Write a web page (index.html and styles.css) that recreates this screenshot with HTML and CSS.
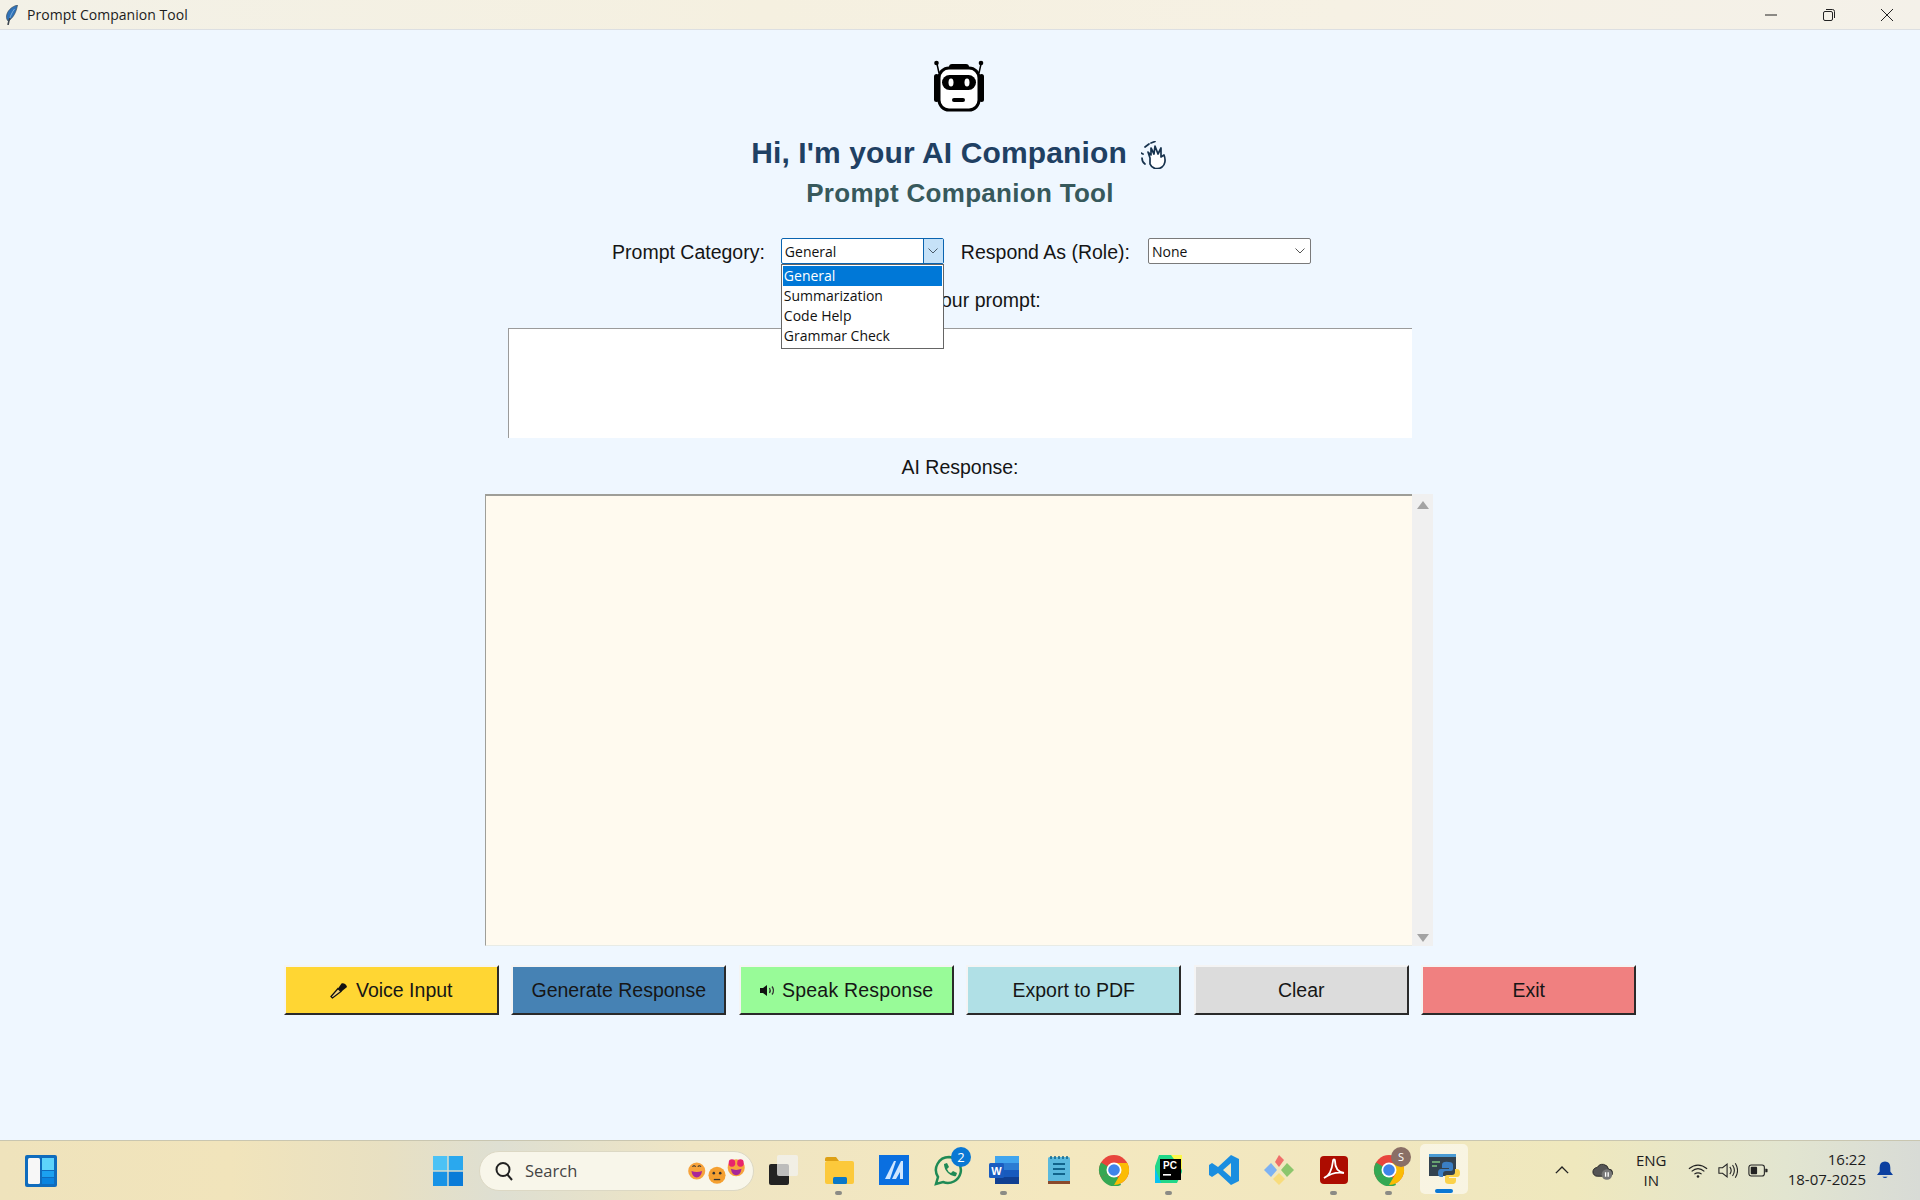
FILE: index.html
```html
<!DOCTYPE html>
<html lang="en">
<head>
    <meta charset="UTF-8">
    <meta name="viewport" content="width=device-width, initial-scale=1.0">
    <title>Prompt Companion Tool</title>
    <link rel="stylesheet" href="styles.css">
</head>
<body>
    <div class="titlebar">
        <svg class="feather" viewBox="0 0 14 20"><path d="M12.500 0C6.500 1.500 2 6 1.500 11c-.2 2 .2 3.500 1.500 5C8 13.500 11.500 7 12.500 0z" fill="#2f72b8" stroke="#33414d" stroke-width=".6"/><path d="M9.500 4C7 7 5.500 11 4.500 14" stroke="#9cc4e8" stroke-width=".7" fill="none"/><path d="M5 13C4 15 3.500 17 3 20" stroke="#3c4650" stroke-width="1.600" fill="none"/></svg>
        <span class="titlebar-text">Prompt Companion Tool</span>
        <div class="window-controls">
            <svg viewBox="0 0 14 14"><path d="M1 7h12" stroke="#222" fill="none"/></svg>
            <svg viewBox="0 0 14 14"><rect x="1.500" y="3.500" width="9" height="9" rx="1.500" stroke="#222" fill="none"/><path d="M4 1.500h6.500a2 2 0 0 1 2 2V10" stroke="#222" fill="none"/></svg>
            <svg viewBox="0 0 14 14"><path d="M1 1l12 12M13 1L1 13" stroke="#222" fill="none"/></svg>
        </div>
    </div>

    <main class="app">
        <svg class="robot" viewBox="0 0 50 52">
            <circle cx="2.500" cy="3" r="2.300" fill="#000"/>
            <circle cx="47" cy="3" r="2.300" fill="#000"/>
            <path d="M3 4l2 9M47 4l-2 9" stroke="#000" stroke-width="1.500"/>
            <path d="M15 9V7q0-3 3-3h14q3 0 3 3v2z" fill="#000"/>
            <rect x="0" y="14" width="5" height="28" rx="2.500" fill="#000"/>
            <rect x="45" y="14" width="5" height="28" rx="2.500" fill="#000"/>
            <rect x="5" y="8" width="40" height="42" rx="10" fill="#fff" stroke="#000" stroke-width="3"/>
            <rect x="8" y="15" width="34" height="15" rx="7.500" fill="#000"/>
            <ellipse cx="17" cy="22.500" rx="2.500" ry="4" fill="#fff"/>
            <ellipse cx="33" cy="22.500" rx="2.500" ry="4" fill="#fff"/>
            <rect x="18" y="38" width="13" height="4" rx="2" fill="#000"/>
        </svg>
        <h1 class="greeting">Hi, I'm your AI Companion
            <svg class="wave" viewBox="0 0 28 28"><g fill="none" stroke="#17324d" stroke-width="1.700" stroke-linecap="round" stroke-linejoin="round"><path d="M9 17l-2-6 3 3 0-7 3 6 1-8 3 8 3-6 0 9 3-2c2 5 1 10-2 12-4 3-10 2-12-3z" fill="#fff"/><path d="M1 17q0 4 3 6M0 12l2 1"/><path d="M4 6l4-3M10 2l4-1.500"/></g></svg>
        </h1>
        <h2 class="subtitle">Prompt Companion Tool</h2>

        <div class="options-row">
            <label class="field-label">Prompt Category:</label>
            <div class="combo combo-open">
                <span class="combo-value">General</span>
                <span class="combo-arrow"><svg viewBox="0 0 10 6"><path d="M.5.5L5 5 9.500.5" stroke="#4a5a68" fill="none"/></svg></span>
                <ul class="combo-list">
                    <li class="selected">General</li>
                    <li>Summarization</li>
                    <li>Code Help</li>
                    <li>Grammar Check</li>
                </ul>
            </div>
            <label class="field-label">Respond As (Role):</label>
            <div class="combo combo-role">
                <span class="combo-value">None</span>
                <span class="combo-arrow"><svg viewBox="0 0 10 6"><path d="M.5.5L5 5 9.500.5" stroke="#555" fill="none"/></svg></span>
            </div>
        </div>

        <label class="field-label prompt-label">Enter your prompt:</label>
        <textarea class="prompt-box"></textarea>

        <label class="field-label response-label">AI Response:</label>
        <div class="response-wrap">
            <textarea class="response-box"></textarea>
            <div class="scrollbar">
                <span class="arrow-up"></span>
                <span class="arrow-down"></span>
            </div>
        </div>

        <div class="button-row">
            <button class="btn btn-voice">
                <svg class="btn-icon" viewBox="0 0 18 17"><path d="M2.500 16L1 14.500l7-8 3 3z" fill="#f3d27a" stroke="#111" stroke-width="1.300"/><path d="M8 6.500l3.500-5c2-1 5 1 5.500 3.500l-5.500 4.500z" fill="#111"/></svg>
                Voice Input
            </button>
            <button class="btn btn-generate">Generate Response</button>
            <button class="btn btn-speak">
                <svg class="btn-icon icon-speaker" viewBox="0 0 17 11"><path d="M1 3h3l4-3v11L4 8H1z" fill="#111"/><path d="M10.500 3q1.500 2.500 0 5M13 1.500q3 4 0 8" stroke="#333" stroke-width="1.300" fill="none"/></svg>
                Speak Response
            </button>
            <button class="btn btn-export">Export to PDF</button>
            <button class="btn btn-clear">Clear</button>
            <button class="btn btn-exit">Exit</button>
        </div>
    </main>

    <footer class="taskbar">
        <svg class="widgets" viewBox="0 0 32 32"><rect width="32" height="32" rx="2" fill="#0f6cbd"/><rect x="3" y="3" width="12" height="26" rx="1.500" fill="#f7f7f7"/><rect x="17" y="3" width="12" height="12" fill="#5ed3fb"/><rect x="17" y="16" width="12" height="6" fill="#1ba1f0"/><rect x="17" y="23" width="12" height="6" fill="#0a84e0"/></svg>

        <div class="task-center">
            <svg class="task-start" viewBox="0 0 30 30">
                <rect width="14.300" height="14.300" fill="#4cc2f5"/><rect x="15.700" width="14.300" height="14.300" fill="#2aa8ee"/>
                <rect y="15.700" width="14.300" height="14.300" fill="#1893e6"/><rect x="15.700" y="15.700" width="14.300" height="14.300" fill="#0a7bd8"/>
            </svg>
            <div class="search">
                <svg class="search-glass" viewBox="0 0 20 20"><circle cx="9" cy="8.500" r="6.500" stroke="#222" stroke-width="2" fill="none"/><path d="M13 13l5 6" stroke="#222" stroke-width="2"/></svg>
                <span class="search-text">Search</span>
                <svg class="search-emoji" viewBox="0 0 56 30">
                    <circle cx="9" cy="15" r="8" fill="#f7a33c"/><path d="M4 15q5 2 10 0-1 6-5 6t-5-6z" fill="#a8269a"/><path d="M5 11q1.500-2 3 0M10 11q1.500-2 3 0" stroke="#333" fill="none"/>
                    <circle cx="28" cy="19" r="8" fill="#f5a030"/><circle cx="25" cy="17" r="1.200" fill="#333"/><circle cx="31" cy="17" r="1.200" fill="#333"/><path d="M25 23h6" stroke="#333" stroke-width="1.200"/>
                    <circle cx="46" cy="12" r="8" fill="#f7a33c"/><path d="M41 13q5 2 10 0-1 6-5 6t-5-6z" fill="#a8269a"/><path d="M39 7a3 3 0 0 1 6 0 3 3 0 0 1-3 4 3 3 0 0 1-3-4zM47 7a3 3 0 0 1 6 0 3 3 0 0 1-3 4 3 3 0 0 1-3-4z" fill="#e8246c"/>
                </svg>
            </div>
            <div class="task-apps">
                <div class="task-app"><svg viewBox="0 0 32 32"><rect x="1" y="10" width="20" height="21" rx="2" fill="#222"/><rect x="9" y="1" width="21" height="21" rx="2" fill="#f2f2f0" opacity=".75"/></svg></div>
                <div class="task-app running"><svg viewBox="0 0 32 32"><path d="M2 5q0-2 2-2h9l3 4h-14z" fill="#dda015"/><rect x="2" y="7" width="29" height="23" rx="2" fill="#fcc93b"/><rect x="10" y="23" width="14" height="7" rx="1.500" fill="#0a78c8"/></svg></div>
                <div class="task-app"><svg viewBox="0 0 32 32"><rect x="1" y="1" width="30" height="30" fill="#0a6fe0"/><path d="M7 25L16 7h2l-6 18zM14 25L23 7h2v18h-3v-7l-4 7z" fill="#cfe6ff"/></svg></div>
                <div class="task-app badged"><svg viewBox="0 0 32 32"><path d="M16 3a13 13 0 0 0-11 20l-2 7 7-2a13 13 0 1 0 6-25z" fill="none" stroke="#1f8a55" stroke-width="2.500"/><path d="M11 10l3-1 2 4-2 2q1 3 4 4l2-2 4 2-1 3q-4 1-8-3t-4-9z" fill="#1f8a55"/></svg><span class="count-badge">2</span></div>
                <div class="task-app running"><svg viewBox="0 0 32 32"><rect x="7" y="2" width="24" height="7" fill="#41a5ee"/><rect x="7" y="9" width="24" height="7" fill="#2b7cd3"/><rect x="7" y="16" width="24" height="7" fill="#185abd"/><rect x="7" y="23" width="24" height="7" fill="#103f91"/><rect x="1" y="9" width="15" height="15" rx="1.500" fill="#1a5cc0"/><text x="8.500" y="21" class="word-w">W</text></svg></div>
                <div class="task-app"><svg viewBox="0 0 32 32"><rect x="5" y="3" width="22" height="26" rx="1.500" fill="#5ab9de"/><rect x="5" y="27" width="22" height="3" fill="#8a4a2c"/><path d="M10 10h12M10 15h12M10 20h12" stroke="#11648c" stroke-width="2"/><path d="M8 2v3M12 2v3M16 2v3M20 2v3M24 2v3" stroke="#11648c" stroke-width="1.500"/></svg></div>
                <div class="task-app"><svg viewBox="0 0 32 32"><use href="#chrome"/></svg></div>
                <div class="task-app running"><svg viewBox="0 0 32 32"><path d="M6 1h23v17l-5 11H2V12z" fill="#21d789"/><path d="M18 1h11v15z" fill="#fcf84a"/><path d="M2 14l6 15H2z" fill="#07c3f2"/><rect x="7" y="5" width="21" height="21" fill="#000"/><text x="10" y="15" class="pc-text">PC</text><rect x="10" y="20" width="8" height="1.600" fill="#fff"/></svg></div>
                <div class="task-app"><svg viewBox="0 0 32 32"><path d="M23 1l8 4v22l-8 4-13-12-6 4-3-2V11l3-2 6 4zM23 9l-8 7 8 7z" fill="#1a8ee0"/></svg></div>
                <div class="task-app"><svg viewBox="0 0 32 32"><path d="M16 1l5 5-5 7-4-5z" fill="#ef6f6a"/><path d="M8 9l6 7-6 7-7-7z" fill="#7db2f2"/><path d="M24 9l7 7-7 7-6-7z" fill="#8cc66c"/><path d="M16 19l6 6-6 6-6-6z" fill="#f8dc7c"/></svg></div>
                <div class="task-app running"><svg viewBox="0 0 32 32"><rect x="2" y="2" width="28" height="28" rx="4" fill="#ad0c00"/><path d="M6 24c5-2 8-8 9-17 0-2 2-2 2 0 0 7 3 11 9 12-6-1-13 0-20 5z" fill="none" stroke="#fff" stroke-width="1.800"/></svg></div>
                <div class="task-app running"><svg viewBox="0 0 32 32"><use href="#chrome"/></svg><span class="profile-badge">S</span></div>
                <div class="task-app active"><svg viewBox="0 0 32 32"><rect x="1" y="2" width="27" height="22" fill="#33424f"/><rect x="1" y="2" width="27" height="3" fill="#4a9bd4"/><path d="M4 10h8M4 14h5" stroke="#7cc47f" stroke-width="1.500"/><path d="M21 10q-7-1-7 3v3h7v1h-8q-3 0-3 4t3 4h2v-3q0-3 3-3h5q2 0 2-2v-4q0-3-4-3z" fill="#3b7fc4"/><path d="M21 32q7 1 7-3v-3h-7v-1h8q3 0 3-4t-3-4h-2v3q0 3-3 3h-5q-2 0-2 2v4q0 3 4 3z" fill="#fbd24a"/></svg></div>
            </div>
        </div>

        <div class="tray">
            <svg class="tray-icon chevron" viewBox="0 0 16 10"><path d="M1 8l7-7 7 7" stroke="#222" stroke-width="1.600" fill="none"/></svg>
            <svg class="tray-icon cloud" viewBox="0 0 24 22"><path d="M6 17a5 5 0 0 1 0-10 7 7 0 0 1 13 2 4 4 0 0 1 1 8z" fill="#555" stroke="#222"/><circle cx="17" cy="15" r="6" fill="#777"/><path d="M15.500 12.500v5M18.500 12.500v5" stroke="#fff" stroke-width="1.500"/></svg>
            <div class="lang"><span>ENG</span><span>IN</span></div>
            <svg class="tray-icon wifi" viewBox="0 0 22 16"><path d="M1 6q10-8 20 0M4 9q7-6 14 0M7 12q4-3 8 0" stroke="#222" stroke-width="1.300" fill="none"/><circle cx="11" cy="14.500" r="1.400" fill="#222"/></svg>
            <svg class="tray-icon volume" viewBox="0 0 22 18"><path d="M1 6h4l5-4v14l-5-4H1z" stroke="#222" stroke-width="1.200" fill="none"/><path d="M13 5q3 4 0 8M16 3q4 6 0 12M19 1q5 8 0 16" stroke="#222" stroke-width="1.200" fill="none"/></svg>
            <svg class="tray-icon battery" viewBox="0 0 22 14"><rect x="1" y="1" width="17" height="12" rx="2.500" stroke="#222" stroke-width="1.200" fill="none"/><rect x="3" y="3" width="7" height="8" rx="1" fill="#222"/><path d="M19 5h1.500q1 0 1 1v2q0 1-1 1H19z" fill="#222"/></svg>
            <div class="clock"><span>16:22</span><span>18-07-2025</span></div>
            <svg class="tray-icon bell" viewBox="0 0 18 20"><path d="M9 0q6 0 6 7v4l3 4H0l3-4V7q0-7 6-7z" fill="#0b3fa0"/><path d="M6 17h6q-3 3-6 0z" fill="#0b3fa0"/></svg>
        </div>
    </footer>

    <svg class="defs" width="0" height="0">
        <symbol id="chrome" viewBox="0 0 32 32">
            <circle cx="16" cy="16" r="15" fill="#e8453c"/>
            <path d="M16 16L3 23.500A15 15 0 0 1 3 8.500z" fill="#34a853"/>
            <path d="M3 23.500l13-7.500 7 15A15 15 0 0 1 3 23.500z" fill="#34a853"/>
            <path d="M16 9h13.400A15 15 0 0 1 16 31l7-12z" fill="#fbbc04"/>
            <circle cx="16" cy="16" r="7.500" fill="#fff"/>
            <circle cx="16" cy="16" r="5.800" fill="#3f84ea"/>
        </symbol>
    </svg>
</body>
</html>
```

FILE: styles.css
```css
* {
    box-sizing: border-box;
}
html, body {
    height: 100%;
}
body {
    margin: 0;
    display: flex;
    flex-direction: column;
    height: 1200px;
    overflow: hidden;
    font-family: "Liberation Sans", Arial, sans-serif;
    background-color: #eff7ff;
    color: #111;
}

/* window title bar */
.titlebar {
    height: 30px;
    flex-shrink: 0;
    display: flex;
    align-items: center;
    padding-left: 5px;
    background: linear-gradient(90deg, #f3f1e7 0%, #f5f0e0 40%, #f6f1e4 70%, #f4f1e9 100%);
    border-bottom: 1px solid #dcdfe2;
}
.feather {
    width: 14px;
    height: 20px;
}
.titlebar-text {
    margin-left: 8px;
    font-family: "Open Sans", sans-serif;
    font-size: 14px;
    letter-spacing: 0.03px;
    color: #1c1c1c;
}
.window-controls {
    margin-left: auto;
    display: flex;
    gap: 44px;
    padding-right: 26px;
}
.window-controls svg {
    width: 14px;
    height: 14px;
}

/* main form */
.app {
    flex: 1;
    display: flex;
    flex-direction: column;
    align-items: center;
    padding-top: 30px;
    min-height: 0;
}
.robot {
    width: 50px;
    height: 52px;
    margin-left: -2px;
}
.greeting {
    margin: 23px 0 0;
    font-size: 30px;
    line-height: 36px;
    font-weight: bold;
    letter-spacing: 0.12px;
    color: #1f4063;
    display: flex;
    align-items: center;
    gap: 14px;
}
.wave {
    width: 28px;
    height: 28px;
    margin-top: 3px;
}
.subtitle {
    margin: 7px 0 0;
    font-size: 26px;
    line-height: 30px;
    font-weight: bold;
    letter-spacing: 0.3px;
    color: #37595c;
}
.options-row {
    margin: 30px 0 0 3px;
    display: flex;
    align-items: center;
    height: 26px;
}
.options-row .field-label {
    padding-top: 1px;
}
.field-label {
    font-size: 19.5px;
    line-height: 24px;
    color: #151515;
}
.combo {
    position: relative;
    width: 163px;
    height: 26px;
    margin: 0 17px 0 16px;
    display: flex;
    align-items: center;
    background-color: #fff;
    border: 1px solid #7a7a7a;
    border-radius: 2px;
    font-family: "Open Sans", sans-serif;
    font-size: 14px;
    padding-left: 3px;
}
.combo-role {
    margin: 0 0 0 18px;
}
.combo-value {
    flex: 1;
}
.combo-arrow {
    width: 20px;
    height: 24px;
    display: flex;
    align-items: center;
    justify-content: center;
}
.combo-arrow svg {
    width: 10px;
    height: 6px;
}
.combo-open {
    border-color: #0a64b0;
}
.combo-open .combo-arrow {
    background-color: #c6e2f8;
    border-left: 1px solid #0a64b0;
}
.combo-list {
    position: absolute;
    z-index: 2;
    top: 25px;
    left: -1px;
    width: 163px;
    height: 85px;
    margin: 0;
    padding: 1px;
    list-style: none;
    background-color: #fff;
    border: 1px solid #656565;
    font-size: 14px;
}
.combo-list li {
    height: 20px;
    line-height: 20px;
    padding-left: 1px;
}
.combo-list .selected {
    background-color: #0078d7;
    color: #fff;
}
.prompt-label {
    margin-top: 24px;
    display: block;
}
.prompt-box {
    width: 904px;
    height: 110px;
    margin-top: 16px;
    background-color: #fff;
    border: none;
    border-top: 1px solid #9b9b9b;
    border-left: 1px solid #9b9b9b;
    resize: none;
    outline: none;
    display: block;
    flex-shrink: 0;
}
.response-label {
    margin-top: 17px;
    display: block;
}
.response-wrap {
    margin: 15px 0 0 -2px;
    display: flex;
    height: 452px;
    flex-shrink: 0;
}
.response-box {
    width: 927px;
    height: 452px;
    background-color: #fffaef;
    border: none;
    border-top: 2px solid #9e9e98;
    border-left: 1px solid #9e9e98;
    border-bottom: 1px solid #e8ebe6;
    resize: none;
    outline: none;
    display: block;
}
.scrollbar {
    width: 21px;
    background-color: #f0f0f0;
    display: flex;
    flex-direction: column;
    justify-content: space-between;
    align-items: center;
    padding: 7px 0 4px;
}
.arrow-up {
    border: 6px solid transparent;
    border-top: 0;
    border-bottom: 8px solid #a3a3a3;
}
.arrow-down {
    border: 6px solid transparent;
    border-bottom: 0;
    border-top: 8px solid #a3a3a3;
}
.button-row {
    margin-top: 19px;
    display: flex;
    gap: 12.500px;
}
.btn {
    width: 215px;
    height: 50px;
    display: flex;
    align-items: center;
    justify-content: center;
    gap: 6px;
    font-family: "Liberation Sans", Arial, sans-serif;
    font-size: 19.5px;
    color: #161616;
    border: 2px solid;
    border-color: #f4f4f4 #2a2a2a #2a2a2a #f4f4f4;
    cursor: pointer;
}
.btn-icon {
    width: 18px;
    height: 17px;
}
.icon-speaker {
    width: 17px;
    height: 11px;
}
.btn-voice {
    background-color: #ffd633;
    gap: 8px;
}
.btn-generate {
    background-color: #4682b4;
}
.btn-speak {
    background-color: #98fb98;
    letter-spacing: 0.2px;
}
.btn-export {
    background-color: #b0e0e6;
}
.btn-clear {
    background-color: #dcdcdc;
}
.btn-exit {
    background-color: #f08080;
}

/* windows taskbar */
.taskbar {
    position: relative;
    height: 60px;
    flex-shrink: 0;
    display: flex;
    align-items: center;
    background: linear-gradient(90deg, #efe3bc 0%, #f1e4bb 12%, #e8e0c2 20%, #dedfd2 26%, #efe5c3 36%, #f4e8bf 55%, #f1e7bf 72%, #efe8bd 82%, #e2e5d0 93%, #d8dbd6 100%);
    border-top: 1px solid #c9c6b0;
    padding-left: 25px;
}
.widgets {
    width: 32px;
    height: 32px;
}
.task-center {
    margin-left: 376px;
    display: flex;
    align-items: center;
}
.task-start {
    width: 30px;
    height: 30px;
}
.search {
    width: 275px;
    height: 40px;
    margin-left: 16px;
    display: flex;
    align-items: center;
    padding: 0 6px 0 14px;
    background-color: #f8f6ea;
    border: 1px solid #dcd8c4;
    border-radius: 20px;
}
.search-glass {
    width: 20px;
    height: 20px;
}
.search-text {
    margin-left: 11px;
    font-family: "Open Sans", sans-serif;
    font-size: 16.500px;
    color: #444;
}
.search-emoji {
    margin-left: auto;
    width: 60px;
    height: 32px;
}
.task-apps {
    display: flex;
    margin-left: 2px;
}
.task-app {
    position: relative;
    width: 55px;
    height: 54px;
    display: flex;
    align-items: center;
    justify-content: center;
    padding-bottom: 2px;
}
.task-app svg {
    width: 32px;
    height: 32px;
}
.task-app.running::after {
    content: "";
    position: absolute;
    bottom: 3px;
    left: 24px;
    width: 7px;
    height: 4px;
    border-radius: 2px;
    background-color: #8b8b85;
}
.task-app.active {
    width: 48px;
    height: 50px;
    margin: 0 3.500px;
    background-color: rgba(255, 255, 255, 0.55);
    border-radius: 5px;
}
.task-app.active::after {
    content: "";
    position: absolute;
    bottom: 1px;
    left: 15px;
    width: 18px;
    height: 4px;
    border-radius: 2px;
    background-color: #0a78d4;
}
.count-badge, .profile-badge {
    position: absolute;
    display: flex;
    align-items: center;
    justify-content: center;
    border-radius: 50%;
    color: #fff;
    font-family: "Open Sans", sans-serif;
}
.count-badge {
    top: 3px;
    right: 5px;
    width: 20px;
    height: 20px;
    font-size: 13px;
    background-color: #0a78d4;
}
.profile-badge {
    top: 3px;
    right: 5px;
    width: 20px;
    height: 20px;
    font-size: 11px;
    background-color: #8a6f66;
}
.word-w {
    font-family: "Liberation Sans", sans-serif;
    font-size: 11px;
    font-weight: bold;
    fill: #fff;
    text-anchor: middle;
}
.pc-text {
    font-family: "Liberation Sans", sans-serif;
    font-size: 10px;
    font-weight: bold;
    fill: #fff;
}
.tray {
    position: absolute;
    right: 0;
    top: 0;
    bottom: 0;
    display: flex;
    align-items: center;
    font-family: "Open Sans", sans-serif;
    font-size: 15px;
    color: #1d1d1d;
}
.tray-icon {
    display: block;
}
.chevron {
    width: 14px;
    height: 9px;
}
.cloud {
    width: 21px;
    height: 20px;
    margin-left: 23px;
}
.lang {
    margin: 0 0 2px 24px;
    width: 29px;
    display: flex;
    flex-direction: column;
    align-items: center;
    line-height: 20px;
}
.wifi {
    width: 20px;
    height: 15px;
    margin-left: 22px;
}
.volume {
    width: 20px;
    height: 17px;
    margin-left: 10px;
}
.battery {
    width: 20px;
    height: 13px;
    margin-left: 10px;
}
.clock {
    margin: 0 0 3px 20px;
    display: flex;
    flex-direction: column;
    align-items: flex-end;
    line-height: 20px;
}
.bell {
    width: 16px;
    height: 19px;
    margin: 0 27px 0 11px;
}
.defs {
    position: absolute;
}
```
